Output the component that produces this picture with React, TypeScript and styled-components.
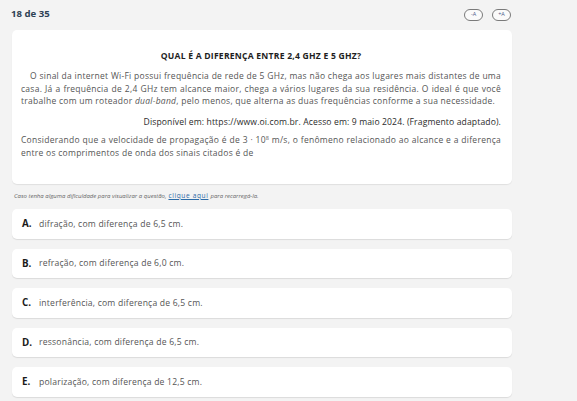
import React from "react";
import styled, { createGlobalStyle } from "styled-components";

const Global = createGlobalStyle`
  html, body { margin: 0; padding: 0; background: #f3f3f3; }
  body { font-family: "Open Sans", "Noto Sans", sans-serif; }
`;

const Page = styled.div`
  width: 577px;
  min-height: 401px;
  padding: 0 0 0 12px;
  box-sizing: border-box;
`;

const Header = styled.div`
  width: 500px;
  height: 30px;
  display: flex;
  align-items: center;
  justify-content: space-between;
`;

const Counter = styled.div`
  margin-left: -1px;
  font-weight: 700;
  font-size: 9.6px;
  color: #2e4255;
  margin-top: -3px;
`;

const FontTools = styled.div`
  display: flex;
  gap: 9px;
  margin-right: 1px;
`;

const FontButton = styled.button`
  width: 19px;
  height: 12px;
  padding: 0;
  border: 1px solid #7a7a7a;
  border-radius: 6px;
  background: #fafafa;
  font-family: "Open Sans", sans-serif;
  font-size: 5.5px;
  color: #4a5a8a;
  display: flex;
  align-items: center;
  justify-content: center;
  line-height: 1;
`;

const Card = styled.div`
  width: 500px;
  height: 154px;
  box-sizing: border-box;
  background: #fff;
  border-radius: 5px;
  box-shadow: 0 1px 1px rgba(0, 0, 0, 0.08);
  padding: 20px 11px 0 9px;
`;

const Title = styled.h1`
  margin: 0;
  text-align: center;
  font-weight: 700;
  font-size: 8.6px;
  letter-spacing: 0.22px;
  line-height: 12px;
  color: #1f1f1f;
`;

const Paragraph = styled.div<{ $gap?: number }>`
  margin: ${(p) => p.$gap ?? 8}px 0 0;
  font-size: 8.5px;
  letter-spacing: 0.27px;
  line-height: 12.5px;
  color: #555;
  sup {
    font-size: 5.5px;
    line-height: 1;
    vertical-align: baseline;
    position: relative;
    top: -3px;
  }
`;

const Line = styled.span<{ $indent?: boolean; $last?: boolean }>`
  display: block;
  white-space: nowrap;
  text-align: justify;
  text-align-last: ${(p) => (p.$last ? "left" : "justify")};
  padding-left: ${(p) => (p.$indent ? "9px" : "0")};
`;

const Source = styled.p`
  margin: 8.5px 0 0;
  text-align: right;
  font-size: 8.6px;
  letter-spacing: 0.12px;
  line-height: 12.5px;
  color: #2b2b2b;
`;

const Note = styled.div`
  height: 23px;
  display: flex;
  align-items: center;
  padding-left: 2px;
  font-size: 6px;
  font-style: italic;
  color: #666;
  white-space: pre;
`;

const ReloadLink = styled.a`
  font-style: normal;
  font-size: 6.6px;
  letter-spacing: 0.6px;
  color: #2d6ca8;
  text-decoration: underline;
  margin: 0 2px 0 2px;
`;

const Options = styled.div`
  width: 500px;
  margin-top: 2px;
  display: flex;
  flex-direction: column;
  gap: 10px;
`;

const Option = styled.div`
  height: 29.5px;
  background: #fff;
  border-radius: 5px;
  box-shadow: 0 1px 1px rgba(0, 0, 0, 0.1);
  display: flex;
  align-items: center;
  padding-left: 10px;
`;

const Letter = styled.span`
  width: 17px;
  font-weight: 700;
  font-size: 9.8px;
  color: #1a1a1a;
`;

const OptionText = styled.span`
  font-size: 8.6px;
  letter-spacing: 0.2px;
  color: #555;
`;

const options: [string, string][] = [
  ["A.", "difração, com diferença de 6,5 cm."],
  ["B.", "refração, com diferença de 6,0 cm."],
  ["C.", "interferência, com diferença de 6,5 cm."],
  ["D.", " ressonância, com diferença de 6,5 cm."],
  ["E.", "polarização, com diferença de 12,5 cm."],
];

export default function App() {
  return (
    <Page>
      <Global />
      <Header>
        <Counter>18 de 35</Counter>
        <FontTools>
          <FontButton>-A</FontButton>
          <FontButton>+A</FontButton>
        </FontTools>
      </Header>
      <Card>
        <Title>QUAL É A DIFERENÇA ENTRE 2,4 GHZ E 5 GHZ?</Title>
        <Paragraph>
          <Line $indent>
            O sinal da internet Wi-Fi possui frequência de rede de 5 GHz, mas não chega aos lugares mais
            distantes de uma
          </Line>
          <Line>
            casa. Já a frequência de 2,4 GHz tem alcance maior, chega a vários lugares da sua residência. O
            ideal é que você
          </Line>
          <Line $last>
            trabalhe com um roteador <i>dual-band</i>, pelo menos, que alterna as duas frequências conforme a
            sua necessidade.
          </Line>
        </Paragraph>
        <Source>
          Disponível em: https://www.oi.com.br. Acesso em: 9 maio 2024. (Fragmento adaptado).
        </Source>
        <Paragraph $gap={5.5}>
          <Line>
            Considerando que a velocidade de propagação é de 3 · 10<sup>8</sup> m/s, o fenômeno relacionado
            ao alcance e a diferença
          </Line>
          <Line $last>entre os comprimentos de onda dos sinais citados é de</Line>
        </Paragraph>
      </Card>
      <Note>
        Caso tenha alguma dificuldade para visualizar a questão,
        <ReloadLink href="#">clique aqui</ReloadLink>
        para recarregá-la.
      </Note>
      <Options>
        {options.map(([l, t]) => (
          <Option key={l}>
            <Letter>{l}</Letter>
            <OptionText>{t}</OptionText>
          </Option>
        ))}
      </Options>
    </Page>
  );
}
